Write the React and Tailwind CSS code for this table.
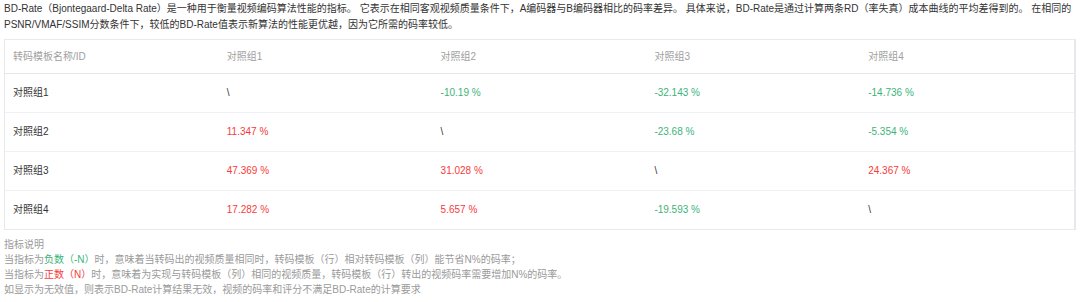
import React from "react";

const G = "g";
const R = "r";
const N = "n";

const rows = [
  ["对照组1", [[N, "\\"], [G, "-10.19 %"], [G, "-32.143 %"], [G, "-14.736 %"]]],
  ["对照组2", [[R, "11.347 %"], [N, "\\"], [G, "-23.68 %"], [G, "-5.354 %"]]],
  ["对照组3", [[R, "47.369 %"], [R, "31.028 %"], [N, "\\"], [R, "24.367 %"]]],
  ["对照组4", [[R, "17.282 %"], [R, "5.657 %"], [G, "-19.593 %"], [N, "\\"]]],
];

function Cell({ kind, text }) {
  const cls =
    kind === G ? "text-[#3db37a]" : kind === R ? "text-[#f73b3b]" : "text-[#333333]";
  return <td className={`pl-2 ${cls}`}>{text}</td>;
}

export default function App() {
  return (
    <div
      className="w-[1080px] h-[302px] bg-white overflow-hidden"
      style={{ fontFamily: '"Liberation Sans", "Noto Sans CJK SC", sans-serif' }}
    >
      <p className="pl-[4px] pt-[1px] text-[10px] leading-[16px] text-[#333333] whitespace-nowrap">
        BD-Rate（Bjontegaard-Delta Rate）是一种用于衡量视频编码算法性能的指标。 它表示在相同客观视频质量条件下，A编码器与B编码器相比的码率差异。 具体来说，BD-Rate是通过计算两条RD（率失真）成本曲线的平均差得到的。 在相同的
        <br />
        PSNR/VMAF/SSIM分数条件下，较低的BD-Rate值表示新算法的性能更优越，因为它所需的码率较低。
      </p>
      <div className="mt-[6px] ml-[4px] w-[1072px] border border-[#e6e9ee] border-r-2">
        <table className="w-full table-fixed border-collapse text-[10px]">
          <thead>
            <tr className="h-[33px] border-b border-[#e3e6eb]">
              <th className="pl-2 text-left font-normal text-[#a0a0a0]">转码模板名称/ID</th>
              <th className="pl-2 text-left font-normal text-[#a0a0a0]">对照组1</th>
              <th className="pl-2 text-left font-normal text-[#a0a0a0]">对照组2</th>
              <th className="pl-2 text-left font-normal text-[#a0a0a0]">对照组3</th>
              <th className="pl-2 text-left font-normal text-[#a0a0a0]">对照组4</th>
            </tr>
          </thead>
          <tbody>
            {rows.map(([name, cells], i) => (
              <tr
                key={name}
                className={`h-[39px] ${i < rows.length - 1 ? "border-b border-[#eef0f3]" : ""}`}
              >
                <td className="pl-2 text-[#333333]">{name}</td>
                {cells.map(([k, t], j) => (
                  <Cell key={j} kind={k} text={t} />
                ))}
              </tr>
            ))}
          </tbody>
        </table>
      </div>
      <div className="pl-[4px] pt-[7px] text-[10px] leading-[15px] text-[#9a9a9a] whitespace-nowrap">
        <div>指标说明</div>
        <div>
          当指标为<span className="text-[#3db37a]">负数（-N）</span>时，意味着当转码出的视频质量相同时，转码模板（行）相对转码模板（列）能节省N%的码率；
        </div>
        <div>
          当指标为<span className="text-[#f73b3b]">正数（N）</span>时，意味着为实现与转码模板（列）相同的视频质量，转码模板（行）转出的视频码率需要增加N%的码率。
        </div>
        <div>如显示为无效值，则表示BD-Rate计算结果无效，视频的码率和评分不满足BD-Rate的计算要求</div>
      </div>
    </div>
  );
}
